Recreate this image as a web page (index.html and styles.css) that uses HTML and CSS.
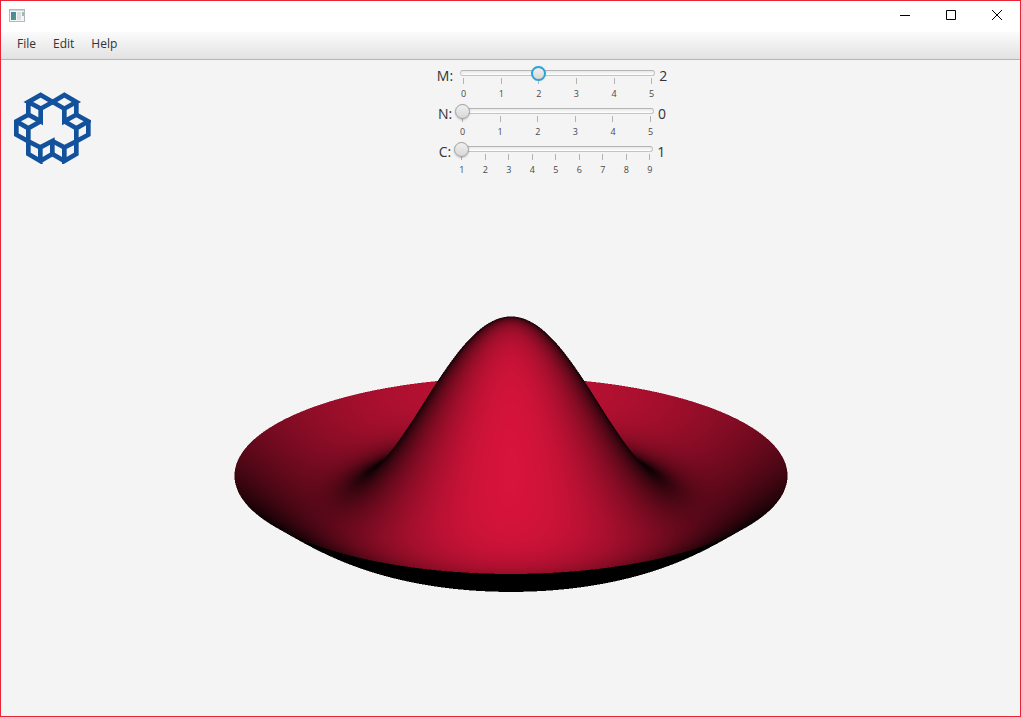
FILE: index.html
```html
<!DOCTYPE html>
<html lang="en">
<head>
<meta charset="utf-8">
<title>Membrane</title>
<link rel="stylesheet" href="styles.css">
</head>
<body>
<div class="window">
  <header class="titlebar">
    <svg class="app-icon" viewBox="0 0 16 13" aria-hidden="true">
      <defs><linearGradient id="pane" x1="0" y1="0" x2="1" y2="1"><stop offset="0" stop-color="#4a7fa8"/><stop offset="1" stop-color="#4f9d74"/></linearGradient></defs>
      <rect x="0.5" y="0.5" width="15" height="12" fill="#f4f5f6" stroke="#b4b7bb"/>
      <rect x="1" y="1" width="14" height="1" fill="#d0d4d8"/>
      <rect x="2" y="3" width="5" height="8" fill="url(#pane)"/>
      <rect x="8" y="3" width="4" height="8" fill="#dcdfe2"/>
      <rect x="13" y="3" width="2" height="4" fill="#8fc1b4"/>
    </svg>
    <div class="window-buttons">
      <button class="window-button" type="button" aria-label="Minimize"><svg viewBox="0 0 12 12"><path d="M1 6.5H11"/></svg></button>
      <button class="window-button" type="button" aria-label="Maximize"><svg viewBox="0 0 12 12"><path d="M1.500 1.500H10.500V10.500H1.500Z"/></svg></button>
      <button class="window-button" type="button" aria-label="Close"><svg viewBox="0 0 12 12"><path d="M1 1L11 11M11 1L1 11"/></svg></button>
    </div>
  </header>
  <nav class="menubar">
    <button class="menu" type="button">File</button>
    <button class="menu" type="button">Edit</button>
    <button class="menu" type="button">Help</button>
  </nav>
  <main class="content">
    <section class="top">
      <svg class="logo" viewBox="42 36 231 216" aria-label="Logo">
        <path d="M122 45L158 66L122 86L85 66ZM85 66V104L122 124V86M85 104L49 124L85 145L122 124M49 124V164L85 184V145M85 184V222L121 243V202L85 184M121 202L157 183V222L121 243"/>
        <path d="M193 45L158 66L193 86L229 66ZM229 66V104L193 124V86M229 104L265 124L229 145L193 124M265 124V164L229 184V145M229 184V222L193 243V202L229 184M193 202L157 183M157 222L193 243"/>
      </svg>
      <div class="controls">
        <div class="control">
          <label class="name" for="m">M:</label>
          <div class="scale">
            <input class="slider" id="m" type="range" min="0" max="5" value="2" autofocus>
            <div class="ticks"><span>0</span><span>1</span><span>2</span><span>3</span><span>4</span><span>5</span></div>
          </div>
          <output class="value" for="m">2</output>
        </div>
        <div class="control">
          <label class="name" for="n">N:</label>
          <div class="scale">
            <input class="slider" id="n" type="range" min="0" max="5" value="0">
            <div class="ticks"><span>0</span><span>1</span><span>2</span><span>3</span><span>4</span><span>5</span></div>
          </div>
          <output class="value" for="n">0</output>
        </div>
        <div class="control">
          <label class="name" for="c">C:</label>
          <div class="scale">
            <input class="slider" id="c" type="range" min="1" max="9" value="1">
            <div class="ticks"><span>1</span><span>2</span><span>3</span><span>4</span><span>5</span><span>6</span><span>7</span><span>8</span><span>9</span></div>
          </div>
          <output class="value" for="c">1</output>
        </div>
      </div>
    </section>
    <section class="stage">
      <canvas class="surface" id="surface" width="580" height="300"></canvas>
    </section>
  </main>
</div>
<script src="surface.js"></script>
</body>
</html>
```

FILE: styles.css
```css
* { box-sizing: border-box; }

body {
  margin: 0;
  font-family: "Open Sans", "Noto Sans", sans-serif;
  color: #333;
}

button { font: inherit; color: inherit; background: none; border: 0; padding: 0; }

.window {
  min-height: 100vh;
  display: flex;
  flex-direction: column;
  border: 1px solid #e92338;
  background: #f4f4f4;
}

.titlebar {
  display: flex;
  justify-content: space-between;
  height: 31px;
  padding-left: 8px;
  background: #fff;
}

.app-icon { width: 16px; height: 13px; margin-top: 8px; }

.window-buttons { display: flex; }

.window-button {
  display: flex;
  align-items: center;
  justify-content: center;
  width: 46px;
  height: 28px;
}

.window-button svg { width: 12px; height: 12px; fill: none; stroke: #000; }

.menubar {
  display: flex;
  gap: 1px;
  height: 28px;
  padding: 0 8px;
  background: linear-gradient(#fbfbfb, #e2e2e2);
  border-bottom: 1px solid #b5b5b5;
}

.menu { padding: 0 8px; height: 24px; font-size: 12px; line-height: 24px; }

.content { flex: 1; display: flex; flex-direction: column; }

.top { display: flex; }

.logo {
  width: 77px;
  height: 72px;
  margin: 32px 0 0 13px;
  fill: none;
  stroke: #12529c;
  stroke-width: 14;
}

.controls { flex: 1; padding: 5px 7px 0 0; }

.control {
  display: flex;
  justify-content: center;
  height: 38px;
  font-size: 14px;
  line-height: 22px;
}

.name { margin-right: 3px; }

.scale { width: 203px; }

.slider {
  appearance: none;
  position: relative;
  isolation: isolate;
  display: block;
  width: 100%;
  height: 16px;
  margin: 0;
  background: none;
  outline: none;
}

.slider::before {
  content: "";
  position: absolute;
  z-index: -1;
  inset: 5px 4px;
  border: 1px solid #c4c4c4;
  border-top-color: #b4b4b4;
  border-radius: 3px;
  background: linear-gradient(#e8e8e8, #fff);
}

.slider::-webkit-slider-thumb {
  appearance: none;
  width: 15px;
  height: 15px;
  border: 1px solid #9d9d9d;
  border-radius: 50%;
  background: linear-gradient(#f0f0f0, #d8d8d8);
  box-shadow: 0 1px 2px rgba(0, 0, 0, 0.2);
}

.slider:focus::-webkit-slider-thumb {
  border: 2px solid #2ba3d4;
  box-shadow: 0 0 1px #7cc8e6;
}

.ticks {
  display: flex;
  justify-content: space-between;
  margin-top: -3px;
  font-size: 9px;
  line-height: 14px;
  color: #4a4a4a;
}

.ticks span { width: 15px; text-align: center; }

.ticks span::before {
  content: "";
  display: block;
  width: 1px;
  height: 6px;
  margin: 0 auto 3px;
  background: #b2b2b2;
}

.stage {
  flex: 1;
  display: flex;
  align-items: center;
  justify-content: center;
}

.surface { display: block; }
```

FILE: surface.js
```js
// Circular membrane mode z = J0(k r), seen in perspective and lit from the camera.
const canvas = document.getElementById("surface");
const SS = 2;
const W = canvas.width * SS, H = canvas.height * SS;

const view = { cx: 290, cy: 77, focal: 793, drop: 69.3, radius: 262, height: 129, sin: 0.252 };
view.cos = Math.sqrt(1 - view.sin * view.sin);
const ROOT = 5.5201;

function bessel(order, x) {
  const n = 60;
  let sum = 0;
  for (let i = 0; i < n; i++) {
    const t = Math.PI * (i + 0.5) / n;
    sum += Math.cos(order * t - x * Math.sin(t));
  }
  return sum / n;
}

function vertex(r, z, slope, t) {
  const { radius, drop, focal, sin, cos } = view;
  const px = r * radius * Math.cos(t), pz = r * radius * Math.sin(t);
  const x = px, y = drop + pz * sin - z * cos, d = focal - pz * cos - z * sin;
  const nx = -slope * Math.cos(t), nz = -slope * Math.sin(t);
  const ny = nz * sin - cos, nd = -(nz * cos + sin);
  const dot = -(nx * x + ny * y + nd * d) / (Math.hypot(nx, ny, nd) * Math.hypot(x, y, d));
  const p = focal / d;
  return [(view.cx + x * p) * SS, (view.cy + y * p) * SS, d, Math.max(0, dot)];
}

const depth = new Float32Array(W * H).fill(Infinity);
const image = new ImageData(W, H);

function triangle(a, b, c) {
  const area = (b[0] - a[0]) * (c[1] - a[1]) - (b[1] - a[1]) * (c[0] - a[0]);
  if (!area) return;
  const x0 = Math.max(0, Math.floor(Math.min(a[0], b[0], c[0])));
  const x1 = Math.min(W - 1, Math.ceil(Math.max(a[0], b[0], c[0])));
  const y0 = Math.max(0, Math.floor(Math.min(a[1], b[1], c[1])));
  const y1 = Math.min(H - 1, Math.ceil(Math.max(a[1], b[1], c[1])));
  for (let y = y0; y <= y1; y++) {
    for (let x = x0; x <= x1; x++) {
      const px = x + 0.5, py = y + 0.5;
      const u = ((b[0] - px) * (c[1] - py) - (b[1] - py) * (c[0] - px)) / area;
      const v = ((c[0] - px) * (a[1] - py) - (c[1] - py) * (a[0] - px)) / area;
      const w = 1 - u - v;
      if (u < -1e-6 || v < -1e-6 || w < -1e-6) continue;
      const d = u * a[2] + v * b[2] + w * c[2];
      const i = y * W + x;
      if (d >= depth[i]) continue;
      depth[i] = d;
      const s = u * a[3] + v * b[3] + w * c[3];
      image.data.set([220 * s, 20 * s, 60 * s, 255], i * 4);
    }
  }
}

const RINGS = 120, SECTORS = 300;
let previous = null;
for (let i = 0; i <= RINGS; i++) {
  const r = i / RINGS;
  const z = view.height * bessel(0, ROOT * r);
  const slope = -view.height / view.radius * ROOT * bessel(1, ROOT * r);
  const ring = [];
  for (let j = 0; j <= SECTORS; j++) ring.push(vertex(r, z, slope, 2 * Math.PI * j / SECTORS));
  if (previous) {
    for (let j = 0; j < SECTORS; j++) {
      triangle(previous[j], ring[j], ring[j + 1]);
      triangle(previous[j], ring[j + 1], previous[j + 1]);
    }
  }
  previous = ring;
}

const buffer = document.createElement("canvas");
buffer.width = W;
buffer.height = H;
buffer.getContext("2d").putImageData(image, 0, 0);
canvas.getContext("2d").drawImage(buffer, 0, 0, canvas.width, canvas.height);

for (const slider of document.querySelectorAll(".slider")) {
  slider.addEventListener("input", () => {
    slider.closest(".control").querySelector(".value").textContent = slider.value;
  });
}
```
